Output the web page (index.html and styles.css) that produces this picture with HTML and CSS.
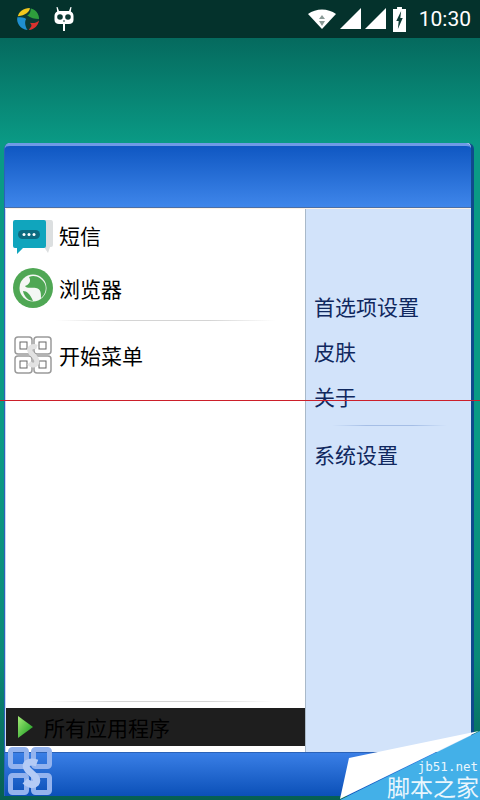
FILE: index.html
```html
<!DOCTYPE html>
<html lang="zh-CN">
<head>
  <meta charset="UTF-8" />
  <meta name="viewport" content="width=device-width, initial-scale=1.0"/>
  <title>开始菜单</title>
  <link rel="stylesheet" href="styles.css">
</head>
<body>

  <div class="statusbar">
    <div class="status-left">
      <svg width="24" height="24" viewBox="0 0 26 26">
        <circle cx="13" cy="13" r="12" fill="#0c3a34"/>
        <path d="M2 10C3 5 8 1 15 1C15 5 10 9 2 10Z" fill="#f2c81e"/>
        <path d="M16 1.500C21 2.500 25 7 25 13C20 13 16 12 12 9C15 8 16 5 16 1.500Z" fill="#2e9e3c"/>
        <path d="M25 14.500C24 20 20 24 14 25C15 22 19 21 15 17C19 18 22 17 25 14.500Z" fill="#d8322e"/>
        <path d="M1.500 11C6 11 9 11 11 13C9 16 10 21 12.500 25C5 24 0 17 1.500 11Z" fill="#1f8fd0"/>
      </svg>
      <svg width="20" height="24" viewBox="0 0 20 24">
        <path d="M2.500 0L3.500 0L5 4H15L16.500 0L17.500 0L16.800 4.600C18.500 5.500 19.500 7 19.500 9V13C19.500 15.500 17.500 17 15 17H11V24H9V17H5C2.500 17 .5 15.500 .5 13V9C.5 7 1.500 5.500 3.200 4.600Z" fill="#fff"/>
        <circle cx="6" cy="10" r="2.800" fill="#0c3a34"/>
        <circle cx="14" cy="10" r="2.800" fill="#0c3a34"/>
        <rect x="9" y="13.500" width="2" height="1" fill="#0c3a34"/>
      </svg>
    </div>
    <div class="status-right">
      <svg width="28" height="20" viewBox="0 0 28 20">
        <path d="M0 5C8 -1 20 -1 28 5L14 20Z" fill="#fff"/>
        <path d="M14 6L11 10H17ZM14 17L11 12H17Z" fill="#8a9a96"/>
      </svg>
      <svg class="signal" width="21" height="21" viewBox="0 0 21 21"><path d="M0 21L21 0V21Z" fill="#fff"/></svg>
      <svg class="signal" width="21" height="21" viewBox="0 0 21 21"><path d="M0 21L21 0V21Z" fill="#fff"/></svg>
      <svg class="battery" width="13" height="25" viewBox="0 0 16 25" preserveAspectRatio="none">
        <path d="M5 0H11V2H16V25H0V2H5Z" fill="#fff"/>
        <path d="M10 4L4 14H7L6 22L12 11H9Z" fill="#0c3a34"/>
      </svg>
      <span class="clock">10:30</span>
    </div>
  </div>

  <div class="desktop">
    <div class="window">
      <div class="title-bar"></div>
      <div class="window-body">
        <div class="left-panel">
          <div class="app-list">
            <div class="app-row">
              <svg class="sms-icon" width="42" height="36" viewBox="0 0 42 36">
                <path d="M32 1H39Q41 1 41 4V26Q41 28 39 28H38L36 34L32 28Z" fill="#dcdfe0"/>
                <path d="M3 1H32Q34 1 34 3V27Q34 29 32 29H11L5 35V29H3Q1 29 1 27V3Q1 1 3 1Z" fill="#10a5bd"/>
                <rect x="6" y="11" width="22" height="9" rx="4.500" fill="#0c6b80"/>
                <circle cx="12" cy="15.500" r="1.500" fill="#fff"/>
                <circle cx="17" cy="15.500" r="1.500" fill="#fff"/>
                <circle cx="22" cy="15.500" r="1.500" fill="#fff"/>
              </svg>
              <span>短信</span>
            </div>
            <div class="app-row">
              <svg width="42" height="42" viewBox="0 0 42 42">
                <circle cx="21" cy="21" r="20" fill="#4fa754"/>
                <circle cx="21" cy="21" r="13.500" fill="#f4f7f4"/>
                <path d="M17 10C23 7 30 11 33 17C35 22 33 28 29 31C29 26 29 22 24 21C20 20 15 22 13 19C16 18 20 15 17 10Z" fill="#4fa754"/>
                <path d="M11 24C15 24 18 27 21 34C17 34 12 30 11 24Z" fill="#4fa754"/>
              </svg>
              <span>浏览器</span>
            </div>
            <div class="divider"></div>
            <div class="app-row start-row">
              <svg width="38" height="38" viewBox="0 0 38 38" fill="none" stroke="#9a9a9a">
                <rect x="1" y="1" width="17" height="17" rx="3" stroke-width="1.500"/>
                <rect x="20" y="1" width="17" height="17" rx="3" stroke-width="1.500"/>
                <rect x="1" y="20" width="17" height="17" rx="3" stroke-width="1.500"/>
                <rect x="20" y="20" width="17" height="17" rx="3" stroke-width="1.500"/>
                <rect x="6" y="6" width="7" height="7" stroke="#666"/>
                <rect x="25" y="6" width="7" height="7" stroke="#666"/>
                <rect x="6" y="25" width="7" height="7" stroke="#666"/>
                <rect x="25" y="25" width="7" height="7" stroke="#666"/>
                <path d="M23 11C17 9 14 13 17 17C20 20 25 24 22 28C20 30 17 29 15 27" stroke="#e2e2e2" stroke-width="5"/>
              </svg>
              <span>开始菜单</span>
            </div>
          </div>
          <div class="divider bottom-divider"></div>
          <div class="all-apps">
            <svg width="18" height="22" viewBox="0 0 18 22">
              <defs>
                <linearGradient id="playFill" x1="0" y1="0" x2="1" y2="1">
                  <stop offset="0" stop-color="#a5ec78"/>
                  <stop offset="1" stop-color="#0c9418"/>
                </linearGradient>
              </defs>
              <path d="M0 0L15 11L0 22Z" fill="url(#playFill)"/>
            </svg>
            <span>所有应用程序</span>
          </div>
        </div>
        <div class="right-panel">
          <div class="side-link">首选项设置</div>
          <div class="side-link">皮肤</div>
          <div class="side-link">关于</div>
          <div class="side-divider"></div>
          <div class="side-link">系统设置</div>
        </div>
      </div>
      <div class="task-bar"></div>
    </div>
  </div>

  <!-- stuff lying over the page -->
  <div class="red-line"></div>

  <svg class="start-logo" width="44" height="48" viewBox="0 0 44 48" fill="none" stroke="#93b3ee" stroke-width="5">
    <rect x="2.500" y="2.500" width="16" height="17" rx="2"/>
    <rect x="25.500" y="2.500" width="16" height="17" rx="2"/>
    <rect x="2.500" y="28.500" width="16" height="17" rx="2"/>
    <rect x="25.500" y="28.500" width="16" height="17" rx="2"/>
    <path d="M29 16C21 13 15 17 20 23C24 27 31 31 28 36C25 39 20 37 17 34" stroke="#b4cbf5" stroke-width="7"/>
  </svg>

  <div class="watermark">
    <svg width="140" height="69" viewBox="0 0 140 69">
      <path d="M9 27L139 0L0 68Z" fill="#fff"/>
      <path d="M140 0V69H0Z" fill="#43b0e8"/>
    </svg>
    <div class="wm-site">jb51.net</div>
    <div class="wm-name">脚本之家</div>
  </div>

</body>
</html>
```

FILE: styles.css
```css
html, body {
  height: 100%;
}

body {
  margin: 0;
  height: 800px;
  overflow: hidden;
  font-family: "Noto Sans CJK SC", "Noto Sans", sans-serif;
  background-color: #056a5e;
  display: flex;
  flex-direction: column;
}

.statusbar {
  height: 38px;
  flex: none;
  background-color: #04322c;
  display: flex;
  justify-content: space-between;
  align-items: center;
  padding: 0 9px 0 16px;
}

.status-left {
  display: flex;
  align-items: center;
  gap: 14px;
}

.status-right {
  display: flex;
  align-items: center;
  gap: 4px;
}

.signal {
  margin-bottom: 1px;
}

.battery {
  margin-left: 3px;
  margin-right: 9px;
}

.clock {
  color: #fff;
  font-family: Roboto, sans-serif;
  font-size: 21px;
}

.desktop {
  flex: 1;
  background: linear-gradient(to bottom, #056a5e 0, #0a9a85 105px, #0a9a85 400px, #0a8a78 620px, #065f52 100%);
  padding: 105px 6px 4px 4px;
  display: flex;
}

.window {
  flex: 1;
  display: flex;
  flex-direction: column;
  border-radius: 6px 6px 0 0;
  border-right: 3px solid #0f4a8c;
  border-left: 1px solid #2a62b8;
  background-color: #fff;
}

.title-bar {
  height: 61px;
  flex: none;
  border-top: 3px solid #6f9ae6;
  border-bottom: 1px solid #4a6fa8;
  border-radius: 5px 5px 0 0;
  background: linear-gradient(to bottom, #0f57c2, #3f86ea);
}

.window-body {
  flex: 1;
  display: flex;
  min-height: 0;
  border-top: 1px solid #fdf1e4;
}

.left-panel {
  width: 300px;
  flex: none;
  background-color: #fff;
  border-left: 1px solid #c4d8f6;
  box-sizing: border-box;
  display: flex;
  flex-direction: column;
  padding-bottom: 6px;
}

.app-list {
  flex: 1;
  margin-top: -1px;
}

.app-row {
  height: 53px;
  display: flex;
  align-items: center;
  gap: 5px;
  padding-left: 6px;
  font-size: 21px;
  color: #000;
}

.app-row svg {
  width: 42px;
  flex: none;
}

.app-row .sms-icon {
  margin-top: 4px;
}

.start-row {
  height: 68px;
}

.start-row svg {
  width: 38px;
  margin: 0 2px;
}

.divider {
  height: 1px;
  margin: 6px 30px 0 50px;
  background: linear-gradient(to right, #fff, #d4d4d4 30%, #d4d4d4 70%, #fff);
}

.bottom-divider {
  margin: 0 30px 6px 40px;
}

.all-apps {
  height: 38px;
  background-color: #1e1e1e;
  display: flex;
  align-items: center;
  gap: 8px;
  padding-left: 12px;
  font-size: 21px;
  color: #000;
}

.right-panel {
  flex: 1;
  background-color: #d2e3fa;
  border-left: 1px solid #a9b9c9;
  padding: 75px 9px 0 8px;
  display: flex;
  flex-direction: column;
}

.side-link {
  height: 45px;
  line-height: 45px;
  font-size: 21px;
  color: #10285e;
}

.side-divider {
  height: 1px;
  margin: 6px 15px 6px 18px;
  background: linear-gradient(to right, #d2e3fa, #a5bee6 30%, #a5bee6 70%, #d2e3fa);
}

.task-bar {
  height: 43px;
  flex: none;
  border-top: 1px solid #2a62b8;
  background: linear-gradient(to bottom, #3a7fe6, #0b50b8);
}

.red-line {
  position: absolute;
  left: 0;
  top: 400px;
  width: 480px;
  height: 1px;
  background-color: #cc1f2a;
}

.start-logo {
  position: absolute;
  left: 8px;
  top: 747px;
}

.watermark {
  position: absolute;
  right: 0;
  bottom: 0;
  width: 140px;
  height: 69px;
  color: #eaf6fd;
}

.watermark svg {
  display: block;
}

.wm-site {
  position: absolute;
  right: 2px;
  top: 28px;
  font-family: "DejaVu Sans Mono", monospace;
  font-size: 12.5px;
  line-height: 15px;
  white-space: nowrap;
}

.wm-name {
  position: absolute;
  right: 1px;
  top: 43px;
  font-size: 23px;
  line-height: 24px;
  white-space: nowrap;
}
```
